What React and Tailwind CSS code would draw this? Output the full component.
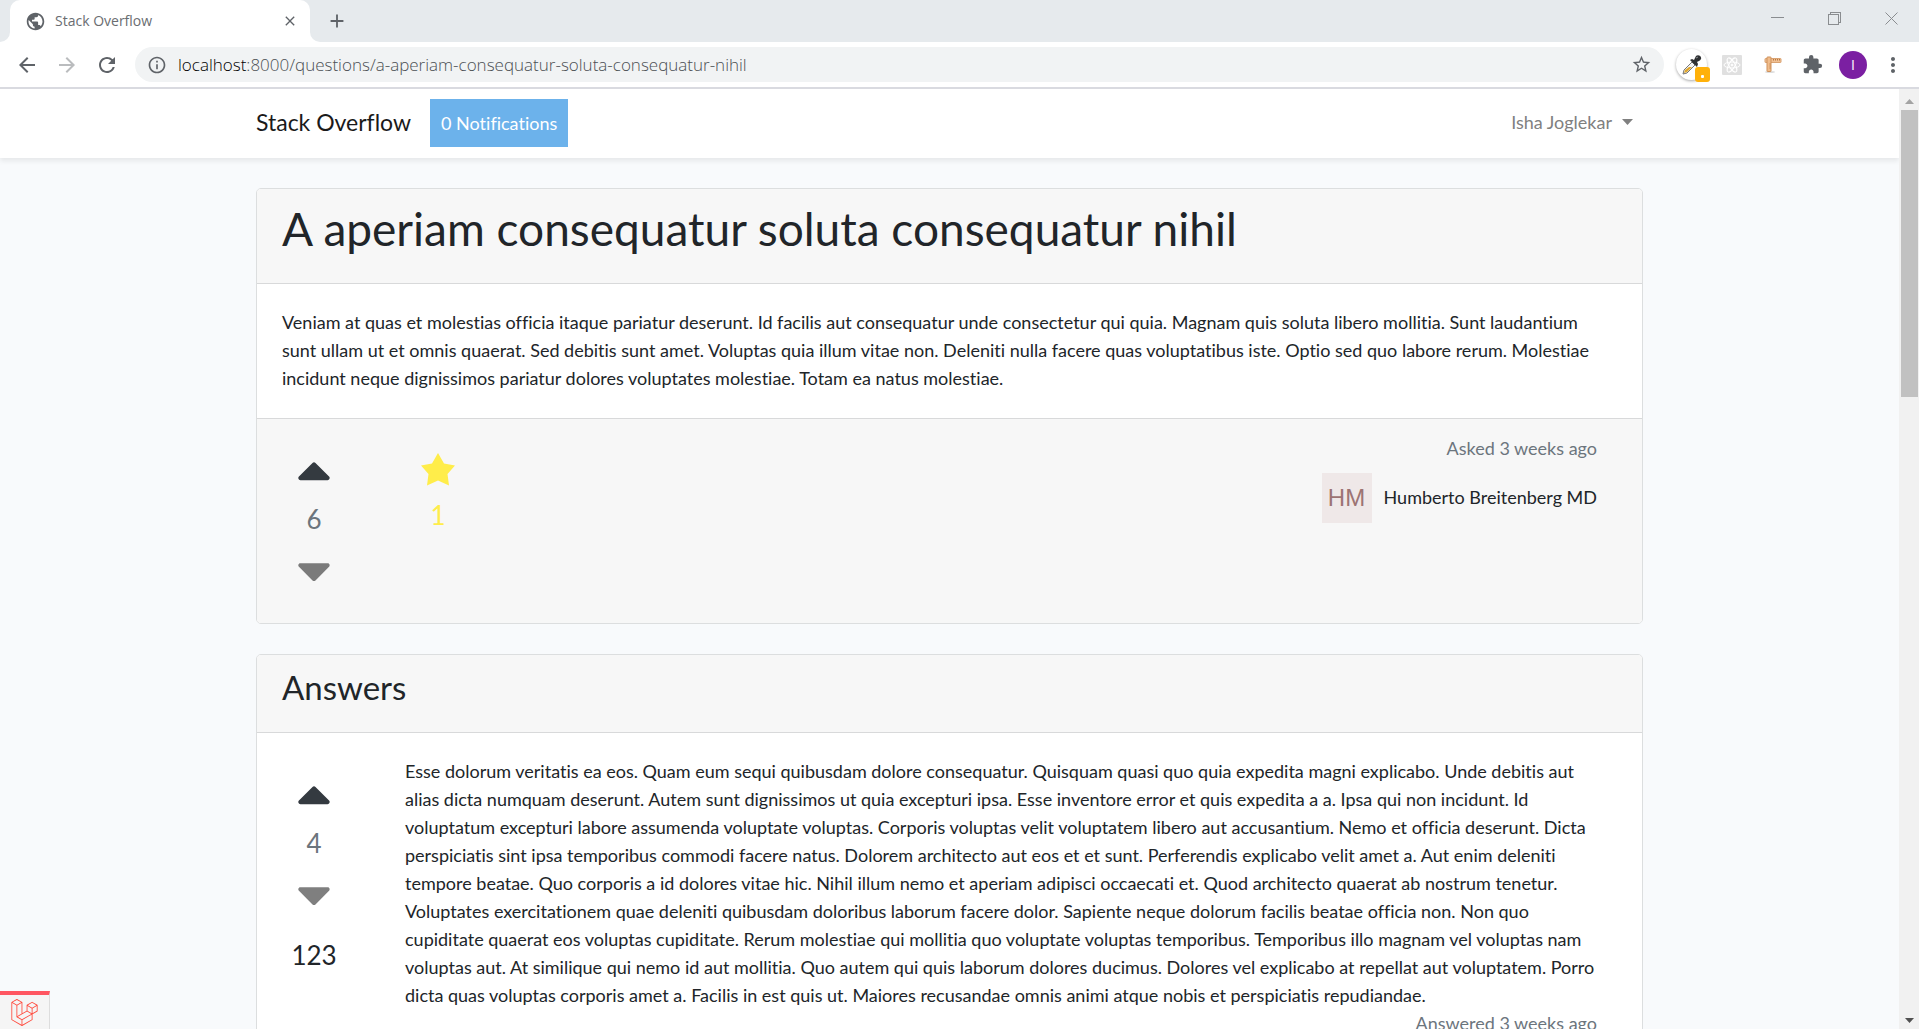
import React, { Fragment } from "react";
import {
  MdArrowBack,
  MdArrowForward,
  MdRefresh,
  MdInfoOutline,
  MdStarBorder,
  MdExtension,
  MdMoreVert,
  MdPublic,
  MdClose,
  MdAdd,
} from "react-icons/md";
import { FaCaretUp, FaCaretDown } from "react-icons/fa";
import { SiLaravel } from "react-icons/si";

const questionLines = [
  "Veniam at quas et molestias officia itaque pariatur deserunt. Id facilis aut consequatur unde consectetur qui quia. Magnam quis soluta libero mollitia. Sunt laudantium",
  "sunt ullam ut et omnis quaerat. Sed debitis sunt amet. Voluptas quia illum vitae non. Deleniti nulla facere quas voluptatibus iste. Optio sed quo labore rerum. Molestiae",
  "incidunt neque dignissimos pariatur dolores voluptates molestiae. Totam ea natus molestiae.",
];

const answerLines = [
  "Esse dolorum veritatis ea eos. Quam eum sequi quibusdam dolore consequatur. Quisquam quasi quo quia expedita magni explicabo. Unde debitis aut",
  "alias dicta numquam deserunt. Autem sunt dignissimos ut quia excepturi ipsa. Esse inventore error et quis expedita a a. Ipsa qui non incidunt. Id",
  "voluptatum excepturi labore assumenda voluptate voluptas. Corporis voluptas velit voluptatem libero aut accusantium. Nemo et officia deserunt. Dicta",
  "perspiciatis sint ipsa temporibus commodi facere natus. Dolorem architecto aut eos et et sunt. Perferendis explicabo velit amet a. Aut enim deleniti",
  "tempore beatae. Quo corporis a id dolores vitae hic. Nihil illum nemo et aperiam adipisci occaecati et. Quod architecto quaerat ab nostrum tenetur.",
  "Voluptates exercitationem quae deleniti quibusdam doloribus laborum facere dolor. Sapiente neque dolorum facilis beatae officia non. Non quo",
  "cupiditate quaerat eos voluptas cupiditate. Rerum molestiae qui mollitia quo voluptate voluptas temporibus. Temporibus illo magnam vel voluptas nam",
  "voluptas aut. At similique qui nemo id aut mollitia. Quo autem qui quis laborum dolores ducimus. Dolores vel explicabo at repellat aut voluptatem. Porro",
  "dicta quas voluptas corporis amet a. Facilis in est quis ut. Maiores recusandae omnis animi atque nobis et perspiciatis repudiandae.",
];

function Lines({ lines }) {
  return lines.map((line, i) => (
    <Fragment key={line}>
      {i > 0 && <br />}
      {line}
    </Fragment>
  ));
}

function TabStrip() {
  return (
    <div className="flex h-[42px] items-end justify-between bg-[#e6eaed]">
      <div className="flex h-full items-end">
        <div className="h-[10px] w-[10px] bg-white">
          <div className="h-full w-full rounded-br-[10px] bg-[#e6eaed]" />
        </div>
        <div className="flex h-full w-[300px] items-center rounded-t-[10px] bg-white pl-[15px] pr-3">
          <MdPublic className="mr-[9px] size-[21px] text-[#5f6368]" />
          <span className="flex-1 text-sm text-[#6a6d71]">Stack Overflow</span>
          <button aria-label="Close tab">
            <MdClose className="size-4 text-[#5f6368]" />
          </button>
        </div>
        <div className="h-[10px] w-[10px] bg-white">
          <div className="h-full w-full rounded-bl-[10px] bg-[#e6eaed]" />
        </div>
        <button aria-label="New tab" className="ml-[6px] flex h-full items-center">
          <MdAdd className="size-[22px] text-[#5f6368]" />
        </button>
      </div>
      <div className="flex h-9 items-center gap-11 self-start pr-[21px] text-[#8a8d90]">
        <button aria-label="Minimize">
          <svg className="size-[13px]" viewBox="0 0 13 13" stroke="currentColor" shapeRendering="crispEdges">
            <path d="M0 5.5h13" />
          </svg>
        </button>
        <button aria-label="Restore">
          <svg className="size-[13px]" viewBox="0 0 13 13" stroke="currentColor" fill="none" shapeRendering="crispEdges">
            <path d="M.5 2.5h10v10h-10zM2.5 2.5v-2h10v10h-2" />
          </svg>
        </button>
        <button aria-label="Close">
          <svg className="size-[13px]" viewBox="0 0 13 13" stroke="currentColor">
            <path d="M.5 .5l12 12M12.5 .5l-12 12" />
          </svg>
        </button>
      </div>
    </div>
  );
}

function Eyedropper() {
  return (
    <button aria-label="Color picker" className="relative flex size-[31px] items-center justify-center rounded-full bg-white shadow-[0_1px_3px_rgba(0,0,0,0.35)]">
      <svg className="size-5" viewBox="0 0 20 20">
        <path d="M1 19l1-4 8-8 3 3-8 8z" fill="#f3f3f3" stroke="#777" />
        <path d="M2 18l1-3 4-3 3 0-5 5z" fill="#e0a72e" />
        <path d="M8 5l2-1 2 1 2-4c2-2 6 0 5 3-1 2-3 2-4 3l1 2-1 3z" fill="#2f3133" />
        <path d="M14 3l2-1" stroke="#8b8f92" />
      </svg>
      <span className="absolute -bottom-[2px] -right-[3px] flex size-[15px] items-end justify-center rounded-[3px] bg-[#ffb10a] pb-1">
        <span className="size-[3px] rounded-[1px] bg-white" />
      </span>
    </button>
  );
}

function Toolbar() {
  return (
    <div className="flex h-[47px] items-center border-b-2 border-[#d9dae0] bg-white pl-[15px] pr-[14px] text-[#5f6368]">
      <div className="flex items-center gap-4">
        <button aria-label="Back"><MdArrowBack className="size-6" /></button>
        <button aria-label="Forward"><MdArrowForward className="size-6 text-[#babcbe]" /></button>
        <button aria-label="Reload"><MdRefresh className="size-6" /></button>
      </div>
      <div className="ml-4 flex h-[35px] flex-1 items-center rounded-full bg-[#f1f3f4] pl-3 pr-3">
        <MdInfoOutline className="size-5" />
        <a href="#" className="ml-[11px] flex-1 text-[17px] font-light text-[#4b4f53]">
          <span className="text-black">localhost</span>:8000/questions/a-aperiam-consequatur-soluta-consequatur-nihil
        </a>
        <button aria-label="Bookmark"><MdStarBorder className="size-[21px]" /></button>
      </div>
      <div className="ml-3 flex items-center">
        <Eyedropper />
        <button aria-label="React tools" className="ml-[15px]">
          <svg className="size-5" viewBox="0 0 20 20" fill="none" stroke="#fff">
            <rect width="20" height="20" rx="1" fill="#e0e0e0" stroke="none" />
            <ellipse cx="10" cy="10" rx="8" ry="3" />
            <ellipse cx="10" cy="10" rx="8" ry="3" transform="rotate(60 10 10)" />
            <ellipse cx="10" cy="10" rx="8" ry="3" transform="rotate(120 10 10)" />
            <circle cx="10" cy="10" r="1" fill="#fff" />
          </svg>
        </button>
        <button aria-label="Page ruler" className="ml-[22px]">
          <svg className="size-[18px]" viewBox="0 0 18 18">
            <ellipse cx="6" cy="16" rx="5" ry="1" fill="#ddd" />
            <rect x="1" y="2.500" width="16" height="4" rx=".5" fill="#f0c094" stroke="#d9a373" />
            <rect x="3" y="1" width="4" height="14.500" rx=".5" fill="#f0bd8c" stroke="#cf915a" />
            <path d="M9.500 3v1.500M11.500 3v1.500M13.500 3v1.500M15.500 3v1.500M5.500 8h1M5.500 10h1M5.500 12h1" stroke="#b87840" />
          </svg>
        </button>
        <button aria-label="Extensions" className="ml-5"><MdExtension className="size-[21px]" /></button>
        <button aria-label="Profile" className="ml-4 flex size-7 items-center justify-center rounded-full bg-[#7b1fa2] text-sm text-white">I</button>
        <button aria-label="Menu" className="ml-[14px]"><MdMoreVert className="size-6" /></button>
      </div>
    </div>
  );
}

function Navbar() {
  return (
    <nav className="h-[69px] shrink-0 bg-white shadow-[0_3px_5px_rgba(0,0,0,0.075)]">
      <div className="mx-auto flex h-full max-w-[1425px] items-center px-[19px] pb-px">
        <a href="#" className="pb-[3px] text-[23px] leading-7 text-[#1a1a1a]">Stack Overflow</a>
        <a href="#" className="ml-[19px] flex h-12 items-center bg-[#6cb2eb] px-[11px] pb-px text-white">0 Notifications</a>
        <button className="ml-auto flex items-center gap-[10px] pb-[2px] pr-[10px] text-[#808080]">
          Isha Joglekar
          <svg className="h-[6px] w-[11px]" viewBox="0 0 11 6" fill="currentColor">
            <path d="M0 0h11L5.500 6z" />
          </svg>
        </button>
      </div>
    </nav>
  );
}

function Votes({ count }) {
  return (
    <div className="flex flex-col items-center">
      <button aria-label="Vote up"><FaCaretUp className="h-[54px] w-[34px] text-[#343a40]" /></button>
      <span className="mt-[2px] text-[26px] leading-10 text-[#6c757d]">{count}</span>
      <button aria-label="Vote down" className="mt-[4px]"><FaCaretDown className="h-[54px] w-[34px] text-black/50" /></button>
    </div>
  );
}

function Question() {
  return (
    <article className="shrink-0 rounded-[5px] border border-[#dcdedf] bg-white">
      <header className="rounded-t-[4px] border-b border-[#d8d9da] bg-[#f7f7f7] px-[25px] pb-[27px] pt-[13px]">
        <h1 className="text-[46px] leading-[54px]">A aperiam consequatur soluta consequatur nihil</h1>
      </header>
      <p className="whitespace-nowrap pb-[26px] pl-[25px] pr-4 pt-6">
        <Lines lines={questionLines} />
      </p>
      <footer className="flex justify-between rounded-b-[4px] border-t border-[#d8d9da] bg-[#f7f7f7] pb-[26px] pl-10 pr-[45px] pt-[15px]">
        <div className="flex pt-[9px]">
          <Votes count="6" />
          <button className="ml-[90px] mt-[10px] flex flex-col items-center self-start text-[#ffed4a]">
            <svg className="h-[33px] w-[34px]" viewBox="0 0 34 33" fill="currentColor">
              <path d="M17 0l6 10.500L34 12.500 26.500 21 28 32.500 17 27.500 6 32.500 7.500 21 0 12.500 11 10.500z" />
            </svg>
            <span className="mt-[9px] text-[26px] leading-10">1</span>
          </button>
        </div>
        <div className="flex flex-col items-end">
          <span className="text-[#6c757d]">Asked 3 weeks ago</span>
          <div className="mt-[11px] flex items-center gap-3">
            <span className="flex size-[50px] items-center justify-center bg-[#efe8e8] font-['Liberation_Sans',sans-serif] text-2xl text-[#9d7474]">HM</span>
            <a href="#" className="pb-[2px]">Humberto Breitenberg MD</a>
          </div>
        </div>
      </footer>
    </article>
  );
}

function Answers() {
  return (
    <section className="mt-[30px] shrink-0 rounded-[5px] border border-[#dcdedf] bg-white">
      <header className="rounded-t-[4px] border-b border-[#d8d9da] bg-[#f7f7f7] px-[25px] pb-[26px] pt-[14px]">
        <h2 className="text-[33px] leading-[37px]">Answers</h2>
      </header>
      <div className="flex px-[25px] pb-[26px] pr-4 pt-6">
        <div className="flex w-[123px] flex-col items-start pt-[10px]">
          <div className="flex w-16 flex-col items-center">
            <Votes count="4" />
            <span className="mt-[14px] text-[26px] leading-10">123</span>
          </div>
        </div>
        <div className="flex flex-1 flex-col">
          <p className="whitespace-nowrap"><Lines lines={answerLines} /></p>
          <span className="self-end pr-[29px] text-[#6c757d]">Answered 3 weeks ago</span>
        </div>
      </div>
    </section>
  );
}

function Scrollbar() {
  return (
    <div className="flex w-5 shrink-0 flex-col items-center bg-[#f1f1f1]">
      <div className="flex h-[21px] items-center pt-1">
        <svg className="h-[5px] w-[9px]" viewBox="0 0 9 5" fill="#a3a3a3"><path d="M0 5h9L4.500 0z" /></svg>
      </div>
      <div className="flex-1 px-[2px]">
        <div className="h-[32%] w-[17px] bg-[#c1c1c1]" />
      </div>
      <div className="flex h-[21px] items-center pt-1">
        <svg className="h-[5px] w-[9px]" viewBox="0 0 9 5" fill="#505050"><path d="M0 0h9L4.500 5z" /></svg>
      </div>
    </div>
  );
}

export default function App() {
  return (
    <div className="flex h-screen flex-col overflow-hidden font-['Open_Sans',sans-serif]">
      <TabStrip />
      <Toolbar />
      <div className="relative flex min-h-0 flex-1">
        <div className="flex min-w-0 flex-1 flex-col overflow-hidden bg-[#f8fafc] font-[Lato,sans-serif] text-[18px] leading-7 text-[#212529] [font-variant-ligatures:none]">
          <Navbar />
          <main className="mx-auto flex w-full max-w-[1425px] flex-col px-[19px] pt-[30px]">
            <Question />
            <Answers />
          </main>
        </div>
        <Scrollbar />
        <a href="#" aria-label="Laravel debug bar" className="absolute bottom-0 left-0 flex h-[38px] w-[50px] items-center justify-center border-r border-t-4 border-r-[#ddd] border-t-[#ff5661] bg-[#f5f5f5]">
          <SiLaravel className="size-[27px] text-[#ff4a3d]" />
        </a>
      </div>
    </div>
  );
}
